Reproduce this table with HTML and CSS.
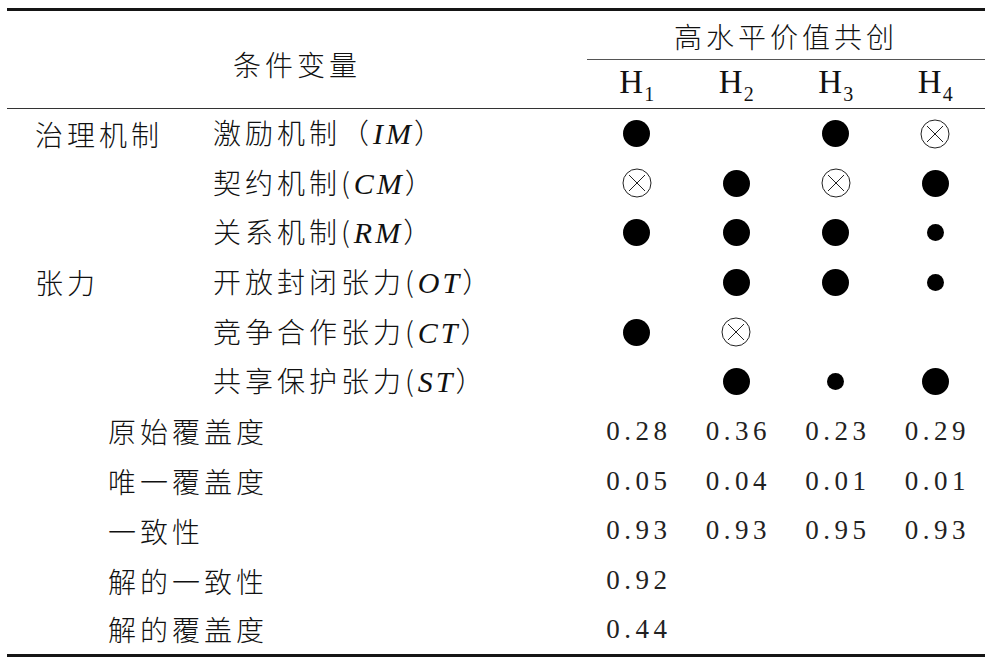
FILE: index.html
```html
<!DOCTYPE html>
<html lang="zh-CN">
<head>
<meta charset="utf-8">
<title>高水平价值共创组态</title>
<link rel="stylesheet" href="styles.css">
</head>
<body>
<table class="qca">
  <colgroup>
    <col class="c-group">
    <col class="c-var">
    <col class="c-h"><col class="c-h"><col class="c-h"><col class="c-h">
  </colgroup>
  <thead>
    <tr class="hd1">
      <th class="cond" rowspan="2" colspan="2">条件变量</th>
      <th class="outcome" colspan="4">高水平价值共创</th>
    </tr>
    <tr class="hd2">
      <th class="h">H<sub>1</sub></th>
      <th class="h">H<sub>2</sub></th>
      <th class="h">H<sub>3</sub></th>
      <th class="h">H<sub>4</sub></th>
    </tr>
  </thead>
  <tbody>
    <tr>
      <td class="grp">治理机制</td>
      <td class="var">激励机制（<i>IM</i>）</td>
      <td class="sym"><span class="dot lg"></span></td>
      <td class="sym"></td>
      <td class="sym"><span class="dot lg"></span></td>
      <td class="sym"><svg class="cross" viewBox="0 0 30 30"><circle cx="15" cy="15" r="14"/><path d="M7 7L23 23M23 7L7 23"/></svg></td>
    </tr>
    <tr>
      <td class="grp"></td>
      <td class="var">契约机制(<i>CM</i>）</td>
      <td class="sym"><svg class="cross" viewBox="0 0 30 30"><circle cx="15" cy="15" r="14"/><path d="M7 7L23 23M23 7L7 23"/></svg></td>
      <td class="sym"><span class="dot lg"></span></td>
      <td class="sym"><svg class="cross" viewBox="0 0 30 30"><circle cx="15" cy="15" r="14"/><path d="M7 7L23 23M23 7L7 23"/></svg></td>
      <td class="sym"><span class="dot lg"></span></td>
    </tr>
    <tr>
      <td class="grp"></td>
      <td class="var">关系机制(<i>RM</i>）</td>
      <td class="sym"><span class="dot lg"></span></td>
      <td class="sym"><span class="dot lg"></span></td>
      <td class="sym"><span class="dot lg"></span></td>
      <td class="sym"><span class="dot sm"></span></td>
    </tr>
    <tr>
      <td class="grp">张力</td>
      <td class="var">开放封闭张力(<i>OT</i>）</td>
      <td class="sym"></td>
      <td class="sym"><span class="dot lg"></span></td>
      <td class="sym"><span class="dot lg"></span></td>
      <td class="sym"><span class="dot sm"></span></td>
    </tr>
    <tr>
      <td class="grp"></td>
      <td class="var">竞争合作张力(<i>CT</i>）</td>
      <td class="sym"><span class="dot lg"></span></td>
      <td class="sym"><svg class="cross" viewBox="0 0 30 30"><circle cx="15" cy="15" r="14"/><path d="M7 7L23 23M23 7L7 23"/></svg></td>
      <td class="sym"></td>
      <td class="sym"></td>
    </tr>
    <tr>
      <td class="grp"></td>
      <td class="var">共享保护张力(<i>ST</i>）</td>
      <td class="sym"></td>
      <td class="sym"><span class="dot lg"></span></td>
      <td class="sym"><span class="dot sm"></span></td>
      <td class="sym"><span class="dot lg"></span></td>
    </tr>
    <tr>
      <td class="stat" colspan="2">原始覆盖度</td>
      <td class="num">0.28</td><td class="num">0.36</td><td class="num">0.23</td><td class="num">0.29</td>
    </tr>
    <tr>
      <td class="stat" colspan="2">唯一覆盖度</td>
      <td class="num">0.05</td><td class="num">0.04</td><td class="num">0.01</td><td class="num">0.01</td>
    </tr>
    <tr>
      <td class="stat" colspan="2">一致性</td>
      <td class="num">0.93</td><td class="num">0.93</td><td class="num">0.95</td><td class="num">0.93</td>
    </tr>
    <tr>
      <td class="stat" colspan="2">解的一致性</td>
      <td class="num">0.92</td><td class="num"></td><td class="num"></td><td class="num"></td>
    </tr>
    <tr class="last">
      <td class="stat" colspan="2">解的覆盖度</td>
      <td class="num">0.44</td><td class="num"></td><td class="num"></td><td class="num"></td>
    </tr>
  </tbody>
</table>
</body>
</html>
```

FILE: styles.css
```css
html, body {
  margin: 0;
  padding: 0;
  background: #fff;
}

body {
  padding: 8px 0 0 7px;
  color: #111;
  font-family: "Liberation Serif", "Noto Sans CJK SC", serif;
}

.qca {
  width: 978px;
  table-layout: fixed;
  border-collapse: collapse;
  border-spacing: 0;
  border-top: 3px solid #151515;
  border-bottom: 3px solid #151515;
}

.c-group { width: 193px; }
.c-var { width: 387px; }
.c-h { width: 99.5px; }

th, td {
  padding: 0;
  font-weight: normal;
  vertical-align: middle;
}

.cond,
.outcome,
.grp,
.var,
.stat {
  font-family: "Noto Sans CJK SC", sans-serif;
  font-weight: 300;
  font-size: 28px;
  letter-spacing: 4px;
  line-height: 1;
}

.var i {
  font-family: "Liberation Serif", serif;
  font-style: italic;
  font-size: 30px;
  letter-spacing: 3px;
}

.hd1 { height: 50px; }
.hd2 { height: 49px; }

.cond {
  text-align: center;
  padding-top: 8px;
  border-bottom: 1.5px solid #333;
}

.outcome {
  text-align: center;
  padding-top: 2px;
  border-bottom: 1.5px solid #555;
}

.hd2 th {
  border-bottom: 1.5px solid #333;
}

.h {
  text-align: center;
  font-family: "Liberation Serif", serif;
  font-size: 33px;
  line-height: 1;
  padding-top: 2px;
}

.h sub {
  font-size: 20px;
  vertical-align: -8px;
  margin-left: 1px;
}

tbody tr { height: 49.7px; }

.grp {
  padding-left: 28px;
  text-align: left;
}

.var {
  padding-left: 13px;
  text-align: left;
}

.stat {
  padding-left: 101px;
  text-align: left;
}

.sym {
  text-align: center;
  line-height: 0;
}

.dot {
  display: inline-block;
  border-radius: 50%;
  background: #000;
  vertical-align: middle;
}

.dot.lg {
  width: 27px;
  height: 27px;
}

.dot.sm {
  width: 17px;
  height: 17px;
}

.cross {
  width: 30px;
  height: 30px;
  vertical-align: middle;
  fill: none;
  stroke: #222;
  stroke-width: 1;
}

.num {
  text-align: center;
  font-family: "Liberation Serif", serif;
  font-size: 27px;
  letter-spacing: 4.5px;
  text-indent: 4px;
  color: #222;
}
```
